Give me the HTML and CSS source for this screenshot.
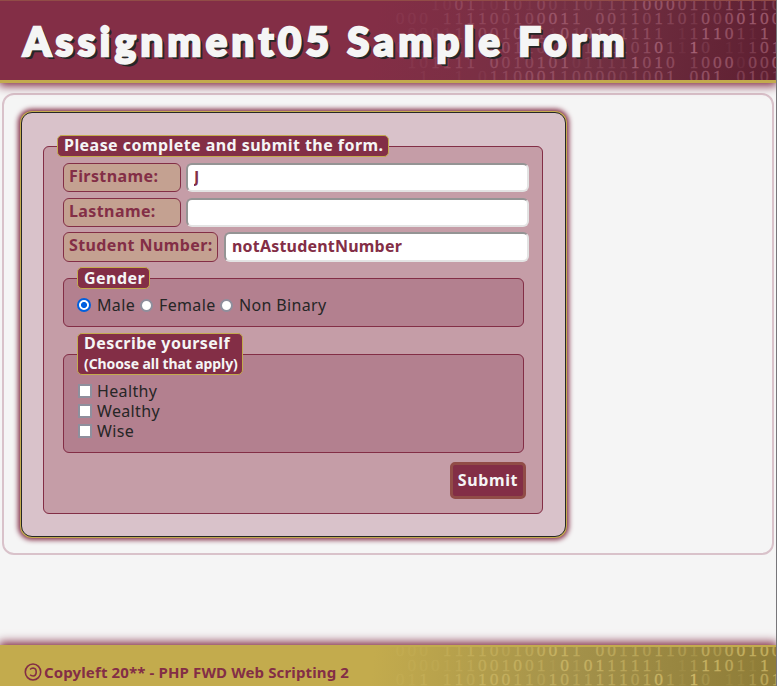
FILE: index.html
```
<!DOCTYPE html>
<html lang="en">
<head>
<meta charset="utf-8">
<title>Assignment05 Sample Form</title>
<link rel="stylesheet" href="styles.css">
</head>
<body>
<header class="site-header">
  <div class="binary binary-header"></div>
  <h1>Assignment05 Sample Form</h1>
</header>
<main class="panel">
  <form class="form" onsubmit="return false">
    <fieldset class="outer">
      <legend>Please complete and submit the form.</legend>
      <div class="row"><label class="tag" for="first">Firstname:</label><input class="field" id="first" type="text" value="J"></div>
      <div class="row"><label class="tag" for="last">Lastname:</label><input class="field" id="last" type="text"></div>
      <div class="row row-number"><label class="tag tag-wide" for="num">Student Number:</label><input class="field" id="num" type="text" value="notAstudentNumber"></div>
      <fieldset class="inner gender">
        <legend>Gender</legend>
        <div class="options">
          <input type="radio" name="g" id="m" checked><label class="male" for="m">Male</label>
          <input type="radio" name="g" id="f"><label class="female" for="f">Female</label>
          <input type="radio" name="g" id="n"><label for="n">Non Binary</label>
        </div>
      </fieldset>
      <fieldset class="inner describe">
        <legend>Describe yourself<small>(Choose all that apply)</small></legend>
        <div class="check"><input type="checkbox" id="h"><label for="h">Healthy</label></div>
        <div class="check"><input type="checkbox" id="w"><label for="w">Wealthy</label></div>
        <div class="check"><input type="checkbox" id="s"><label for="s">Wise</label></div>
      </fieldset>
      <button class="submit" type="submit">Submit</button>
    </fieldset>
  </form>
</main>
<footer class="site-footer">
  <div class="binary binary-footer"></div>
  <p><svg class="copyleft" viewBox="0 0 18 18" width="18" height="18"><ellipse cx="9" cy="9" rx="7.7" ry="8" /><path d="M6.1 6.4Q7.3 5 9.1 5Q12.2 5.2 12.2 9Q12.2 12.8 9.1 13Q7.3 13 6.1 11.8"/></svg><span>Copyleft 20** - PHP FWD Web Scripting 2</span></p>
</footer>
<script src="script.js"></script>
</body>
</html>
```
FILE: styles.css
```
* { box-sizing: border-box; }
html { height: 100%; }
body {
  margin: 0;
  height: 686px;
  overflow: hidden;
  display: flex;
  flex-direction: column;
  background: #f5f5f5;
  border-right: 1px solid #77767a;
  color: #262626;
  font: 16px/20px "Noto Sans", "Open Sans", sans-serif;
  letter-spacing: 0.35px;
}
.site-header {
  position: relative;
  flex: none;
  height: 83px;
  border-top: 1px solid #914c47;
  border-bottom: 3px solid #c3ab4d;
  background: linear-gradient(100deg, #832e46 48%, #723042 76%, #5f2032 98%);
  box-shadow: 0 2px 9px 1px #832e46;
}
h1 {
  position: relative;
  margin: 0;
  padding: 15px 0 0 23px;
  font: 900 40px/50px Lato, sans-serif;
  letter-spacing: 4.45px;
  color: #f5f5f5;
  -webkit-text-stroke: 2.4px #f5f5f5;
  text-shadow: 1px 1px 0 #262626, 2px 2px 0 #262626, 3px 3px 0 #262626;
  white-space: nowrap;
}
.binary {
  position: absolute;
  inset: 0;
  overflow: hidden;
}
.binary svg { display: block; }
.binary text {
  font: 17.5px "Liberation Serif", serif;
  letter-spacing: 0;
  text-anchor: middle;
  stroke: currentColor;
  stroke-width: 0.3px;
}
.binary-header { color: #c07c90; }
.binary-footer { color: #e5d07b; }
.binary-footer svg { margin-top: -14px; }
.panel {
  flex: none;
  width: 772px;
  height: 462px;
  margin: 10px 0 0 2px;
  padding: 17px;
  border: 2px solid #d9c2ca;
  border-radius: 12px;
}
.form {
  width: 545px;
  height: 425px;
  padding: 22px 0 0 21px;
  border: 1px solid #262626;
  border-radius: 11px;
  background: #d9c2ca;
  box-shadow: 0 0 0 1px #c3ab4d, 0 0 5px 3px #832e46;
}
fieldset {
  margin: 0;
  min-width: 0;
  border: 1px solid #832e46;
  border-radius: 6px;
}
.outer {
  width: 500px;
  height: 379px;
  padding: 6px 13px 0 19px;
  background: #c59da7;
}
legend {
  height: 22px;
  padding: 0 0 0 6px;
  border: 1px solid #c3ab4d;
  border-radius: 5px;
  background: #832e46;
  color: #f5f5f5;
  font-weight: 700;
  line-height: 19px;
  letter-spacing: 0.45px;
  white-space: nowrap;
}
.outer > legend { width: 332px; margin-left: -6px; }
.row {
  display: flex;
  gap: 5px;
  height: 29px;
  margin-bottom: 6px;
}
.row-number { gap: 6px; height: 30px; margin: -1px 0 5px; }
.tag {
  flex: none;
  width: 118px;
  padding: 2px 5px;
  border: 1px solid #832e46;
  border-radius: 6px;
  background: #c4a191;
  color: #832e46;
  font-weight: 700;
  letter-spacing: 0.4px;
  white-space: nowrap;
}
.tag-wide { width: 155px; }
.field {
  flex: 1;
  min-width: 0;
  padding: 0 6px 2px;
  border: 2px solid;
  border-color: #949494 #e3e3e3 #e3e3e3 #949494;
  border-radius: 6px;
  outline: none;
  background: #fff;
  color: #832e46;
  font: 700 16px "Noto Sans", sans-serif;
  letter-spacing: 0.2px;
}
.inner {
  width: 461px;
  padding: 0 13px;
  background: #b3808f;
}
.gender { height: 60px; margin-bottom: 6px; }
.gender legend { width: 73px; line-height: 20px; }
.describe { height: 120px; }
.describe legend {
  width: 166px;
  height: 42px;
}
.describe small {
  display: block;
  font-size: 14px;
  line-height: 22px;
  letter-spacing: -0.1px;
}
.options {
  display: flex;
  align-items: center;
  padding-top: 6px;
}
.options label { margin-left: 6px; }
.options .male { width: 43px; }
.options .female { width: 61px; }
input[type="radio"], input[type="checkbox"] {
  appearance: none;
  flex: none;
  width: 14px;
  height: 14px;
  margin: 0;
  border: 2px solid #8f8f9d;
  background: #fff;
}
input[type="radio"] { width: 13px; height: 13px; border-radius: 50%; }
input[type="radio"]:checked {
  width: 14px;
  height: 14px;
  border-color: #0060df;
  background: radial-gradient(circle, #0060df 2.7px, #fff 3.3px);
}
.check {
  display: flex;
  align-items: center;
  height: 20px;
}
.describe .check:first-of-type { margin-top: 6px; }
.check input { margin-left: 1px; }
.check label { margin-left: 5px; }
.submit {
  display: block;
  width: 76px;
  height: 37px;
  margin: 9px 3px 0 auto;
  padding: 0 0 2px;
  border: 3px solid #914c47;
  border-radius: 5px;
  background: #832e46;
  color: #f5f5f5;
  font: 700 16px/20px "Noto Sans", sans-serif;
  letter-spacing: 0.6px;
}
.site-footer {
  position: relative;
  flex: none;
  height: 41px;
  margin-top: 90px;
  border-top: 2px solid #c3ab4d;
  background: linear-gradient(98deg, #c3ab4d 48%, #a3914a 74%, #8f7d38 98%);
  box-shadow: 0 -2px 9px 1px #832e46;
}
.site-footer p {
  position: relative;
  display: flex;
  align-items: center;
  gap: 2px;
  margin: 0;
  padding: 15px 0 0 24px;
  color: #832e46;
  font-weight: 700;
  font-size: 15px;
  letter-spacing: 0.13px;
  white-space: nowrap;
}
.copyleft {
  fill: none;
  stroke: currentColor;
  stroke-width: 1.6;
}
```
FILE: script.js
```
// Each row: digits by column in groups of four ("." is blank), then brightness (0-9) of each column.
const rows = [
  ["...1 0011 0101 0011 0111 1000 0110 1111 0", "000113311421321322334555443355543"],
  ["000. 1111 0010 0011 0001 1011 0100 0010 0", "111022333233455404434343325356665"],
  [".000 1110 0100 1101 0111 111. 1111 0111 .", "011112233343315255444430136653160"],
  ["011. 1101 0011 0101 1111 0101 110. 1110 1", "112023244433244334443463172011355"],
  ["0101 111. 0010 1010 1111 1010 .100 0000 0", "011233304333445122226454034551446"],
  ["..1. .1.0 1100 0110 0000 1001 .001 .010 1", "001001013334443333323344045503433"]
];
const digitsOf = ([groups, glow], r) =>
  [...groups.replaceAll(" ", "")].map((d, k) => d === "." ? "" :
    `<text x="${400 + 11.75 * k}" y="${9 + 14.4 * r}" fill="currentColor" opacity="${glow[k] * 0.1}">${d}</text>`
  ).join("");
const svg = `<svg width="776" height="90">${rows.map(digitsOf).join("")}</svg>`;
document.querySelectorAll(".binary").forEach(el => { el.innerHTML = svg; });
```
